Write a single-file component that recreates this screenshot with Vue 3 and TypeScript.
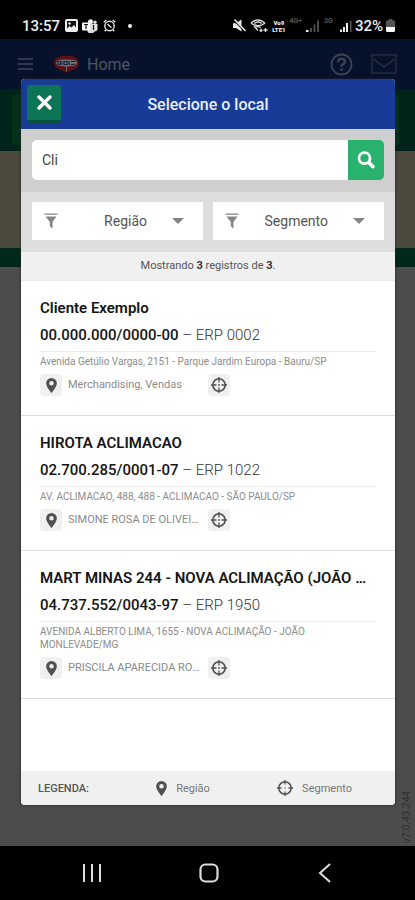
<script setup lang="ts">
import { computed, ref } from 'vue'

interface Place {
  name: string
  document: string
  erp: string
  address: string
  region: string
}

const places: Place[] = [
  {
    name: 'Cliente Exemplo',
    document: '00.000.000/0000-00',
    erp: 'ERP 0002',
    address: 'Avenida Getúlio Vargas, 2151 - Parque Jardim Europa - Bauru/SP',
    region: 'Merchandising, Vendas',
  },
  {
    name: 'HIROTA ACLIMACAO',
    document: '02.700.285/0001-07',
    erp: 'ERP 1022',
    address: 'AV. ACLIMACAO, 488, 488 - ACLIMACAO - SÃO PAULO/SP',
    region: 'SIMONE ROSA DE OLIVEIRA',
  },
  {
    name: 'MART MINAS 244 - NOVA ACLIMAÇÃO (JOÃO MONLEVADE)',
    document: '04.737.552/0043-97',
    erp: 'ERP 1950',
    address: 'AVENIDA ALBERTO LIMA, 1655 - NOVA ACLIMAÇÃO - JOÃO MONLEVADE/MG',
    region: 'PRISCILA APARECIDA RODRIGUES',
  },
]

const filters = ['Região', 'Segmento']
const query = ref('Cli')
const total = computed(() => places.length)
</script>

<template>
  <div class="phone">
    <div class="status">
      <span class="clock">13:57</span>
      <svg class="st-photo" width="13" height="13" viewBox="0 0 13 13">
        <rect width="13" height="13" rx="2" fill="#eee" />
        <path d="M2 2h9v9H2z" fill="#111" />
        <path d="M2 11V9.500L4.500 7l2 1.500L9 6l2 2.500V11z" fill="#eee" />
        <circle cx="4.500" cy="4.500" r="1.200" fill="#eee" />
      </svg>
      <svg class="st-teams" width="16" height="14" viewBox="0 0 16 14">
        <circle cx="8.500" cy="2.700" r="2.500" fill="#eee" />
        <circle cx="13" cy="3.200" r="1.700" fill="#ddd" />
        <path d="M5 5h10.500v4.500a3 3 0 0 1-3 3 4 4 0 0 1-7 0z" fill="#ddd" />
        <rect y="3.500" width="8" height="8" rx="1" fill="#fff" />
        <path d="M2 5.500h4M4 5.500v4.500M11.500 6v5" stroke="#111" stroke-width="1.200" />
      </svg>
      <svg class="st-alarm" width="13" height="13" viewBox="0 0 13 13" fill="none" stroke="#e5e5e5" stroke-width="1.400">
        <circle cx="6.500" cy="7" r="4.700" />
        <path d="M4.500 5 6.500 7l2 1.500M.8 3.300 3.300 1M12.200 3.300 9.700 1M3 11l-1.300 1.300M10 11l1.300 1.300" />
      </svg>
      <span class="dot"></span>
      <span class="grow"></span>
      <svg width="14" height="13" viewBox="0 0 14 13">
        <path d="M1 4.200h3L9.500.5v12L4 9H1z" fill="#eee" />
        <path d="M1.500.5 13 12" stroke="#000" stroke-width="2" />
        <path d="M2.500.5 13.500 12" stroke="#eee" stroke-width="1.500" />
      </svg>
      <svg class="st-wifi" width="18" height="14" viewBox="0 0 18 14" fill="none" stroke="#ddd" stroke-width="1.300">
        <path d="M1 4.200Q8 -2.200 15 4.200M1 4.200Q8 9 15 4.200M4.200 4.500q3.800-3 7.600 0M5.300 8.500q2.700-1.800 5.400 0M4 7l4 4.500" />
        <path d="M9.500 11.500h3M11 13V9.500M13.500 11h4M15.500 9v4" />
      </svg>
      <span class="volte"><span>Vo9</span><span>LTE1</span></span>
      <span class="net">4G+</span>
      <svg class="st-signal" width="13" height="12" viewBox="0 0 13 12">
        <path d="M4 12V8h2v4zM7.500 12V4.500h2V12zM11 12V.5h2V12z" fill="#4a4a4a" />
        <path d="M0 12v-2h2.500v2z" fill="#eee" />
      </svg>
      <span class="net net-3g">3G</span>
      <svg class="st-signal2" width="12" height="12" viewBox="0 0 12 12">
        <path d="M0 12V9.500h2V12zM3 12V7h2v5zM6 12V3h2v9z" fill="#eee" />
        <path d="M10 12V.5h1.500V12z" fill="#555" />
      </svg>
      <span class="battery-text">32%</span>
      <svg width="9" height="13" viewBox="0 0 9 13">
        <path d="M2.500 0h4v1.500H9V8H0V1.500h2.500z" fill="#555" />
        <path d="M0 8h9v3.500A1.500 1.500 0 0 1 7.500 13h-6A1.500 1.500 0 0 1 0 11.500z" fill="#fff" />
      </svg>
    </div>

    <div class="stage">
      <header class="appbar">
        <button class="plain" type="button" aria-label="Menu">
          <svg width="15" height="12" viewBox="0 0 15 12" stroke="#3e4658" stroke-width="1.600">
            <path d="M0 1h15M0 6h15M0 11h15" />
          </svg>
        </button>
        <svg class="logo" width="27" height="19" viewBox="0 0 27 19">
          <path d="M13.500 1C20 0 26 3 26 8c0 4-4 6.500-8.500 7.500L13.500 18l-4-2.500C5 14.500 1 12 1 8c0-5 6-8 12.500-7z" fill="#5a1014" />
          <path d="M3 8c.5-3.500 4-3.500 10.500-3.500S23.500 4.500 24 8c-.5 3.500-5 3-7 3l-3 1v4.500h-1V12l-3-1c-2 0-6.500.5-7-3z" fill="#666a73" />
          <path d="M5 6.500h2.500v3H5zM9 6.500v3M11 6.500h3v3h-3zM16 6v4M18 6.500h4M18 9.500h4" stroke="#1b2340" stroke-width="1.100" fill="none" />
        </svg>
        <span class="app-title">Home</span>
        <span class="grow"></span>
        <button class="plain" type="button" aria-label="Ajuda">
          <svg width="23" height="23" viewBox="0 0 23 23" fill="none" stroke="#3a4355">
            <circle cx="11.500" cy="11.500" r="10" stroke-width="1.800" />
            <path d="M8 9.300c0-4.800 7-4.300 7-.6 0 2.500-3.500 2.300-3.500 5" stroke-width="2.500" />
            <path d="M11.500 15.300v2.400" stroke-width="2.600" />
          </svg>
        </button>
        <button class="plain mail" type="button" aria-label="Mensagens">
          <svg width="26" height="20" viewBox="0 0 26 20" fill="none" stroke="#222b3d" stroke-width="1.600">
            <rect x="1" y="1" width="24" height="18" />
            <path d="m2 5 11 8 11-8" />
          </svg>
        </button>
      </header>
      <div class="band"><div class="band-card"></div></div>
      <div class="banner"></div>
      <div class="strip"></div>
      <span class="version">v7.0.43.244</span>

      <section class="dialog" role="dialog" aria-labelledby="dialog-title">
        <div class="dialog-head">
          <button class="close" type="button" aria-label="Fechar">
            <svg width="15" height="15" viewBox="0 0 15 15" stroke="#fff" stroke-width="3.400" stroke-linecap="round">
              <path d="m2 2 11 11M13 2 2 13" />
            </svg>
          </button>
          <h1 id="dialog-title">Selecione o local</h1>
        </div>

        <form class="search" @submit.prevent>
          <input v-model="query" type="text" aria-label="Buscar local" />
          <button type="submit" aria-label="Buscar">
            <svg width="18" height="18" viewBox="0 0 18 18" fill="none" stroke="#fff">
              <circle cx="7.500" cy="7.200" r="5.500" stroke-width="2.800" />
              <path d="m12 11.700 3.800 3.900" stroke-width="3.600" stroke-linecap="round" />
            </svg>
          </button>
        </form>

        <div class="filters">
          <label v-for="filter in filters" :key="filter" class="filter">
            <svg width="14" height="16" viewBox="0 0 14 16" fill="#858585">
              <path d="M.5.500h13v1.300H.5zM1.500 3.400h11L8.500 9v6.500l-2.700-2.200V9z" />
            </svg>
            <select :aria-label="filter">
              <option>{{ filter }}</option>
            </select>
            <svg class="caret" width="12" height="6" viewBox="0 0 12 6"><path d="M0 0h12L6 6z" fill="#858585" /></svg>
          </label>
        </div>

        <p class="count">Mostrando <b>{{ total }}</b> registros de <b>{{ total }}</b>.</p>

        <ul class="list">
          <li v-for="place in places" :key="place.document" class="place">
            <h2>{{ place.name }}</h2>
            <p class="doc"><b>{{ place.document }}</b> – {{ place.erp }}</p>
            <p class="address">{{ place.address }}</p>
            <div class="tags">
              <span class="chip">
                <svg width="11" height="15" viewBox="0 0 10 14">
                  <path fill-rule="evenodd" d="M5 0a5 5 0 0 1 5 5c0 3.400-5 9-5 9S0 8.400 0 5a5 5 0 0 1 5-5zm0 2.800a2.100 2.100 0 1 0 0 4.200 2.100 2.100 0 0 0 0-4.200z" fill="#505050" />
                </svg>
              </span>
              <span class="region">{{ place.region }}</span>
              <span class="chip">
                <svg width="16" height="16" viewBox="0 0 16 16" fill="none" stroke="#505050">
                  <circle cx="8" cy="8" r="6.200" stroke-width="1.600" />
                  <path d="M8 0v5.500M8 10.500V16M0 8h5.500M10.500 8H16" stroke-width="1.300" />
                  <circle cx="8" cy="8" r=".9" fill="#505050" stroke="none" />
                </svg>
              </span>
            </div>
          </li>
        </ul>

        <footer class="legend">
          <b>LEGENDA:</b>
          <span class="legend-item">
            <svg width="11" height="15" viewBox="0 0 10 14">
              <path fill-rule="evenodd" d="M5 0a5 5 0 0 1 5 5c0 3.400-5 9-5 9S0 8.400 0 5a5 5 0 0 1 5-5zm0 2.800a2.100 2.100 0 1 0 0 4.200 2.100 2.100 0 0 0 0-4.200z" fill="#505050" />
            </svg>
            Região
          </span>
          <span class="legend-item">
            <svg width="16" height="16" viewBox="0 0 16 16" fill="none" stroke="#505050">
              <circle cx="8" cy="8" r="6.200" stroke-width="1.500" />
              <path d="M8 0v4.500M8 11.500V16M0 8h4.500M11.500 8H16" stroke-width="1.300" />
              <circle cx="8" cy="8" r=".8" fill="#707070" stroke="none" />
            </svg>
            Segmento
          </span>
        </footer>
      </section>
    </div>

    <nav class="navbar">
      <button class="plain" type="button" aria-label="Recentes">
        <svg width="20" height="20" viewBox="0 0 20 20" stroke="#ddd" stroke-width="2"><path d="M2 1v18M10 1v18M18 1v18" /></svg>
      </button>
      <button class="plain" type="button" aria-label="Início">
        <svg width="20" height="20" viewBox="0 0 20 20"><rect x="1.500" y="1.500" width="17" height="17" rx="5" fill="none" stroke="#ddd" stroke-width="2.200" /></svg>
      </button>
      <button class="plain" type="button" aria-label="Voltar">
        <svg width="20" height="20" viewBox="0 0 20 20" fill="none" stroke="#ddd" stroke-width="2"><path d="M15 1 5 10l10 9" /></svg>
      </button>
    </nav>
  </div>
</template>

<style>
body {
  margin: 0;
  background: #000;
}
</style>

<style scoped>
* {
  box-sizing: border-box;
}
.phone {
  display: flex;
  flex-direction: column;
  min-height: 100vh;
  font-family: Roboto, 'Liberation Sans', sans-serif;
  background: #000;
}
h1, h2, p, ul {
  margin: 0;
  padding: 0;
}
svg {
  display: block;
  flex: none;
}
button {
  border: 0;
  padding: 0;
  font: inherit;
  display: flex;
  align-items: center;
  justify-content: center;
}
.plain {
  background: none;
}
.grow {
  flex: 1;
}

.status {
  height: 39px;
  padding: 12px 20px 0 22px;
  display: flex;
  align-items: center;
  color: #eee;
}
.clock,
.battery-text {
  font-size: 15px;
  font-weight: 500;
}
.st-photo {
  margin-left: 5px;
}
.st-teams {
  margin-left: 4px;
}
.st-alarm {
  margin-left: 5px;
}
.dot {
  width: 4px;
  height: 4px;
  margin-left: 12px;
  border-radius: 50%;
  background: #eee;
}
.st-wifi {
  margin-left: 4px;
}
.volte {
  display: flex;
  flex-direction: column;
  margin-left: 4px;
  font-size: 6px;
  line-height: 7px;
  font-weight: 900;
  text-align: center;
}
.net {
  align-self: flex-start;
  margin: 5px 0 0 4px;
  font-size: 7px;
  line-height: 8px;
  font-weight: 700;
  color: #555;
}
.st-signal {
  margin-left: 4px;
}
.net-3g {
  margin-left: 5px;
}
.st-signal2 {
  margin: 0 3px 0 7px;
}
.battery-text {
  margin-right: 3px;
}

.stage {
  position: relative;
  flex: 1;
  padding-bottom: 41px;
  background: #4c4c4c;
}
.appbar {
  height: 50px;
  padding: 0 18px;
  display: flex;
  align-items: center;
  background: #06122c;
}
.logo {
  margin: 0 7px 0 20px;
}
.app-title {
  font-size: 16px;
  color: #4d5462;
}
.mail {
  margin-left: 18px;
}
.band {
  height: 62px;
  padding: 6px 16px 6px 12px;
  background: #01241a;
}
.band-card {
  height: 50px;
  border-radius: 3px;
  background: #05301c;
}
.banner {
  height: 97px;
  background: #4b4a3c;
}
.strip {
  height: 19px;
  background: #01281b;
}
.version {
  position: absolute;
  right: 3px;
  bottom: 3px;
  writing-mode: vertical-rl;
  transform: rotate(180deg);
  font-size: 10px;
  color: #303030;
}

.dialog {
  position: absolute;
  inset: 40px 20px 41px 21px;
  display: flex;
  flex-direction: column;
  overflow: hidden;
  border-radius: 4px;
  background: #fff;
  box-shadow: 0 0 3px #222;
}
.dialog-head {
  height: 50px;
  padding: 0 6px;
  display: flex;
  align-items: center;
  background: #173b96;
}
.close {
  width: 34px;
  height: 38px;
  border-radius: 3px;
  border-bottom: 3px solid #07503f;
  background: #0b7556;
}
.dialog-head h1 {
  flex: 1;
  padding-right: 34px;
  text-align: center;
  font-size: 16px;
  font-weight: 500;
  color: #e9eefa;
}

.search {
  height: 63px;
  padding: 11px 11px 12px;
  display: flex;
  background: #cfcfcf;
}
.search input {
  flex: 1;
  min-width: 0;
  border: 0;
  border-radius: 5px 0 0 5px;
  padding: 0 10px;
  font: 14px Roboto, 'Liberation Sans', sans-serif;
  color: #444;
  background: #fff;
  outline: 0;
}
.search button {
  width: 36px;
  border-radius: 0 5px 5px 0;
  background: #28b26d;
}

.filters {
  height: 60px;
  padding: 10px 11px 12px;
  display: grid;
  grid-template-columns: 1fr 1fr;
  gap: 10px;
  background: #dedede;
}
.filter {
  display: flex;
  align-items: center;
  padding: 0 19px 0 12px;
  background: #fff;
}
.filter select {
  flex: 1;
  min-width: 0;
  height: 100%;
  padding: 0 37px 0 0;
  border: 0;
  appearance: none;
  background: none;
  font: 14px Roboto, 'Liberation Sans', sans-serif;
  text-align: right;
  text-align-last: right;
  color: #555;
}
.caret {
  margin-left: -12px;
  pointer-events: none;
}

.count {
  height: 29px;
  line-height: 28px;
  border-bottom: 1px solid #e8e8e8;
  text-align: center;
  font-size: 11px;
  color: #555;
  background: #f0f0f0;
}
.count b {
  color: #333;
}

.list {
  flex: 1;
  list-style: none;
}
.place {
  padding: 14px 19px 19px;
  border-bottom: 1px solid #dcdcdc;
}
.place h2 {
  overflow: hidden;
  white-space: nowrap;
  text-overflow: ellipsis;
  padding-right: 4px;
  font-size: 15px;
  line-height: 27px;
  font-weight: 600;
  color: #151515;
}
.doc {
  padding-bottom: 2px;
  border-bottom: 1px solid #ececec;
  font-size: 15px;
  line-height: 27px;
  font-weight: 300;
  color: #333;
}
.doc b {
  font-weight: 500;
  color: #151515;
}
.address {
  margin: 3px 0 6px;
  padding-right: 30px;
  font-size: 10px;
  line-height: 13px;
  color: #8c8c8c;
}
.tags {
  display: flex;
  align-items: center;
}
.chip {
  width: 22px;
  height: 22px;
  display: flex;
  align-items: center;
  justify-content: center;
  border-radius: 4px;
  background: #f0f0f0;
}
.region {
  width: 134px;
  margin: 0 6px;
  overflow: hidden;
  white-space: nowrap;
  text-overflow: ellipsis;
  font-size: 11px;
  line-height: 16px;
  color: #8a8a8a;
}

.legend {
  height: 34px;
  padding: 0 43px 0 17px;
  display: flex;
  align-items: center;
  justify-content: space-between;
  font-size: 11px;
  color: #777;
  background: #f0f0f0;
}
.legend b {
  font-weight: 500;
  color: #555;
}
.legend-item {
  display: flex;
  align-items: center;
  gap: 9px;
}

.navbar {
  height: 54px;
  padding: 0 80px 0 82px;
  display: flex;
  align-items: center;
  justify-content: space-between;
}
</style>
